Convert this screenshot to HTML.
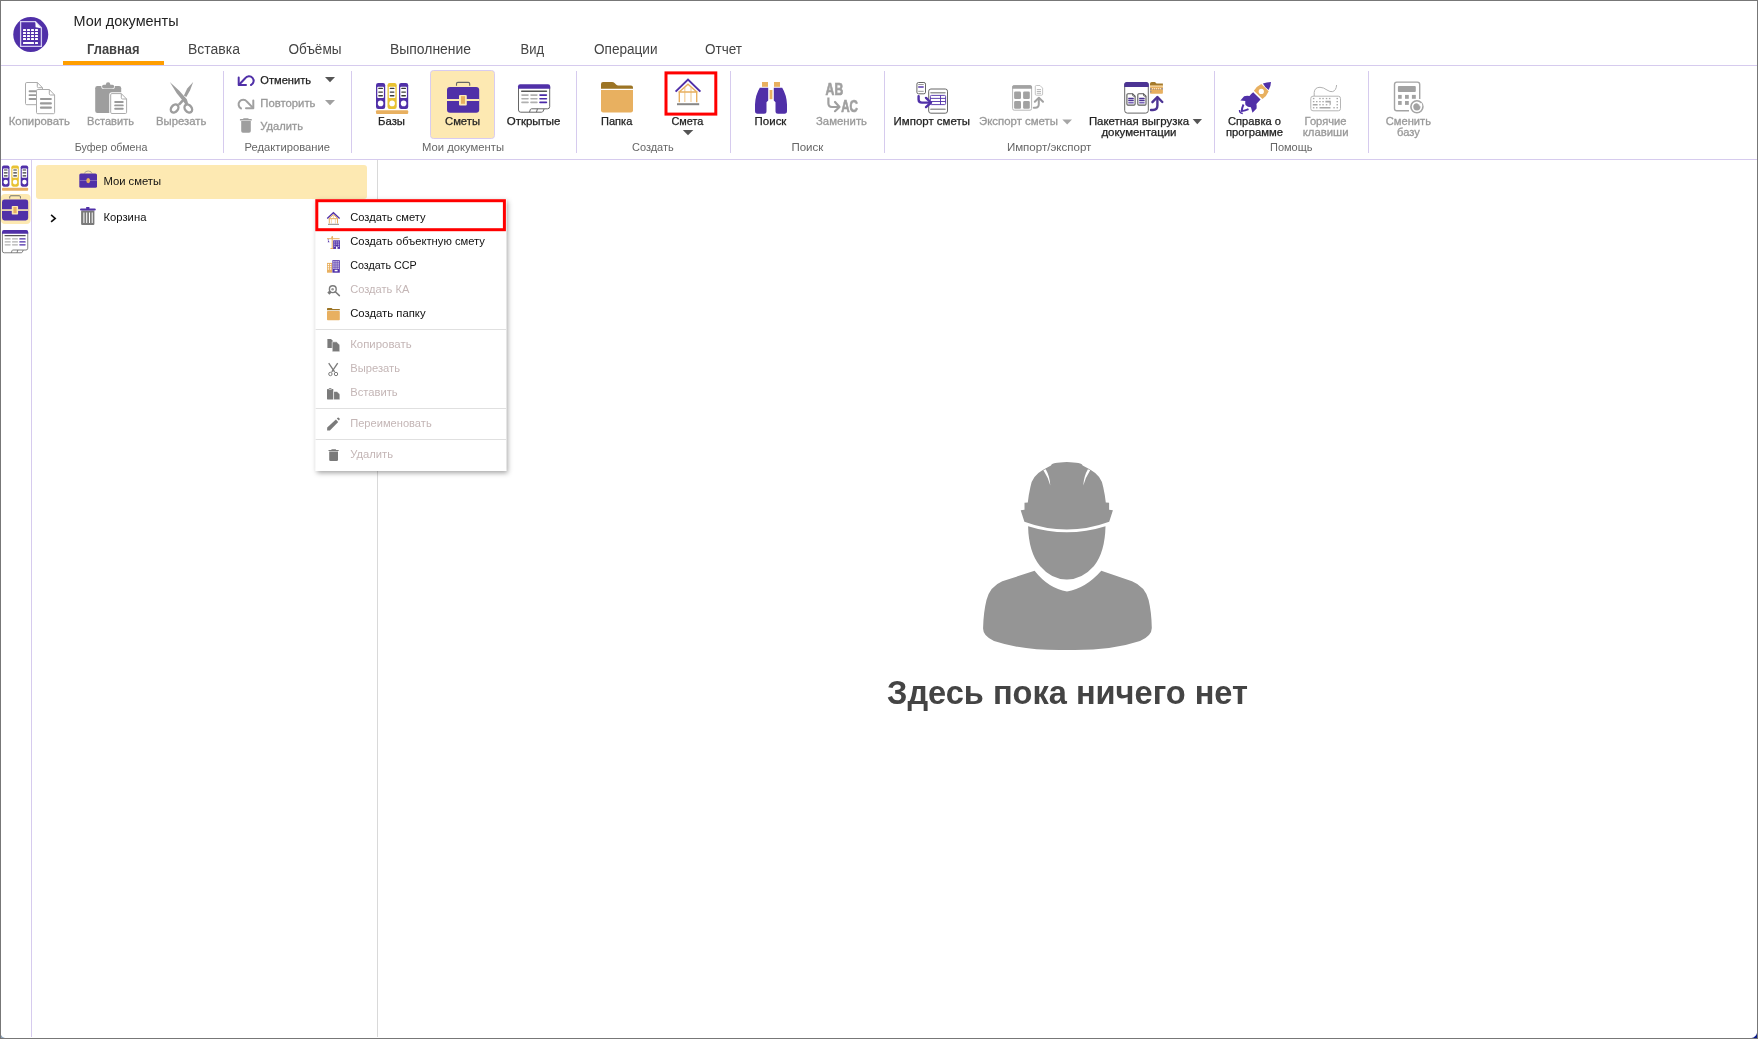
<!DOCTYPE html>
<html><head><meta charset="utf-8"><title>Мои документы</title>
<style>
html,body{margin:0;padding:0;width:1758px;height:1039px;overflow:hidden;background:#fff}
svg{position:absolute;left:0;top:0;display:block;will-change:transform}
text{font-family:"Liberation Sans",sans-serif}
.tab{font-size:14px;fill:#444}
.rb{font-size:11px;fill:#222;stroke:#222;stroke-width:0.25}
.rg{font-size:11px;fill:#999;stroke:#999;stroke-width:0.3}
.gl{font-size:11px;fill:#666}
.mi{font-size:11px;fill:#111}
.md{font-size:11px;fill:#c4b6b6}
</style></head>
<body>
<svg width="1758" height="1039" viewBox="0 0 1758 1039">
<!-- window frame -->
<rect x="0" y="0" width="1758" height="1039" fill="#fff"/>
<!-- ribbon lines -->
<rect x="1" y="65" width="1756" height="1" fill="#d6cbee"/>
<rect x="63" y="61" width="101" height="4" fill="#ff9e00"/>
<rect x="1" y="159" width="1756" height="1" fill="#d6cbee"/>
<g fill="#d6cbee">
<rect x="223" y="71" width="1" height="82"/>
<rect x="351" y="71" width="1" height="82"/>
<rect x="576" y="71" width="1" height="82"/>
<rect x="730" y="71" width="1" height="82"/>
<rect x="884" y="71" width="1" height="82"/>
<rect x="1214" y="71" width="1" height="82"/>
<rect x="1368" y="71" width="1" height="82"/>
</g>
<!-- sidebar & tree lines -->
<rect x="31" y="160" width="1" height="877" fill="#d6cbee"/>
<rect x="377" y="160" width="1" height="877" fill="#d9d9d9"/>
<!-- title & tabs -->
<text x="73.5" y="26" font-size="14" fill="#222" textLength="105" lengthAdjust="spacingAndGlyphs">Мои документы</text>
<text class="tab" x="87" y="54" font-weight="bold" fill="#333" textLength="52.5" lengthAdjust="spacingAndGlyphs">Главная</text>
<text class="tab" x="188" y="54" textLength="52" lengthAdjust="spacingAndGlyphs">Вставка</text>
<text class="tab" x="288.5" y="54" textLength="53" lengthAdjust="spacingAndGlyphs">Объёмы</text>
<text class="tab" x="390" y="54" textLength="81" lengthAdjust="spacingAndGlyphs">Выполнение</text>
<text class="tab" x="520.5" y="54" textLength="23.5" lengthAdjust="spacingAndGlyphs">Вид</text>
<text class="tab" x="594" y="54" textLength="63.5" lengthAdjust="spacingAndGlyphs">Операции</text>
<text class="tab" x="705" y="54" textLength="37" lengthAdjust="spacingAndGlyphs">Отчет</text>

<!-- selected Сметы button -->
<rect x="430.5" y="70.5" width="64" height="68" rx="3" fill="#fde9b2" stroke="#d8ccf0" stroke-width="1"/>
<!-- red box around Смета -->
<rect x="666" y="72.9" width="49.8" height="41.2" fill="none" stroke="#ff0000" stroke-width="3"/>

<!-- ribbon labels -->
<text class="rg" x="8.7" y="125" textLength="61.3" lengthAdjust="spacingAndGlyphs">Копировать</text>
<text class="rg" x="87" y="125" textLength="47" lengthAdjust="spacingAndGlyphs">Вставить</text>
<text class="rg" x="156" y="125" textLength="50.4" lengthAdjust="spacingAndGlyphs">Вырезать</text>
<text class="rb" x="260.3" y="83.6" textLength="50.7" lengthAdjust="spacingAndGlyphs">Отменить</text>
<text class="rg" x="260.3" y="106.5" textLength="55.2" lengthAdjust="spacingAndGlyphs">Повторить</text>
<text class="rg" x="260.3" y="129.8" textLength="42.7" lengthAdjust="spacingAndGlyphs">Удалить</text>
<text class="rb" x="378" y="125" textLength="27" lengthAdjust="spacingAndGlyphs">Базы</text>
<text class="rb" x="445" y="125" textLength="35" lengthAdjust="spacingAndGlyphs">Сметы</text>
<text class="rb" x="506.7" y="125" textLength="53.8" lengthAdjust="spacingAndGlyphs">Открытые</text>
<text class="rb" x="601" y="125" textLength="31.3" lengthAdjust="spacingAndGlyphs">Папка</text>
<text class="rb" x="671.4" y="125" textLength="31.9" lengthAdjust="spacingAndGlyphs">Смета</text>
<text class="rb" x="754.6" y="125" textLength="31.8" lengthAdjust="spacingAndGlyphs">Поиск</text>
<text class="rg" x="816" y="125" textLength="51" lengthAdjust="spacingAndGlyphs">Заменить</text>
<text class="rb" x="893.6" y="125" textLength="76.3" lengthAdjust="spacingAndGlyphs">Импорт сметы</text>
<text class="rg" x="979" y="125" textLength="79" lengthAdjust="spacingAndGlyphs">Экспорт сметы</text>
<text class="rb" x="1088.9" y="124.8" textLength="100.1" lengthAdjust="spacingAndGlyphs">Пакетная выгрузка</text>
<text class="rb" x="1101.4" y="135.5" textLength="75.1" lengthAdjust="spacingAndGlyphs">документации</text>
<text class="rb" x="1228" y="124.5" textLength="53" lengthAdjust="spacingAndGlyphs">Справка о</text>
<text class="rb" x="1226" y="135.5" textLength="57" lengthAdjust="spacingAndGlyphs">программе</text>
<text class="rg" x="1304.6" y="124.5" textLength="41.9" lengthAdjust="spacingAndGlyphs">Горячие</text>
<text class="rg" x="1302.7" y="135.5" textLength="45.8" lengthAdjust="spacingAndGlyphs">клавиши</text>
<text class="rg" x="1385.8" y="124.5" textLength="45.2" lengthAdjust="spacingAndGlyphs">Сменить</text>
<text class="rg" x="1397" y="135.5" textLength="22.8" lengthAdjust="spacingAndGlyphs">базу</text>
<!-- group labels -->
<text class="gl" x="74.7" y="151" textLength="72.7" lengthAdjust="spacingAndGlyphs">Буфер обмена</text>
<text class="gl" x="244.5" y="151" textLength="85.5" lengthAdjust="spacingAndGlyphs">Редактирование</text>
<text class="gl" x="422" y="151" textLength="82" lengthAdjust="spacingAndGlyphs">Мои документы</text>
<text class="gl" x="632" y="151" textLength="41.7" lengthAdjust="spacingAndGlyphs">Создать</text>
<text class="gl" x="791.4" y="151" textLength="31.9" lengthAdjust="spacingAndGlyphs">Поиск</text>
<text class="gl" x="1006.9" y="151" textLength="84.5" lengthAdjust="spacingAndGlyphs">Импорт/экспорт</text>
<text class="gl" x="1270" y="151" textLength="42.5" lengthAdjust="spacingAndGlyphs">Помощь</text>

<!-- tree -->
<rect x="36" y="165" width="331" height="34" rx="3" fill="#fde9b2"/>
<rect x="1" y="194" width="29.5" height="30" rx="4" fill="#fde9b2"/>
<text class="mi" x="103.4" y="185.1" textLength="57.7" lengthAdjust="spacingAndGlyphs">Мои сметы</text>
<text class="mi" x="103.5" y="221.3" textLength="42.9" lengthAdjust="spacingAndGlyphs">Корзина</text>

<!-- context menu -->
<g>
<rect x="315.6" y="199.2" width="190.6" height="271.8" fill="#fff" filter="url(#ds)"/>
<rect x="315.6" y="329" width="190.6" height="1" fill="#e0e0e0"/>
<rect x="315.6" y="408" width="190.6" height="1" fill="#e0e0e0"/>
<rect x="315.6" y="439" width="190.6" height="1" fill="#e0e0e0"/>
<rect x="316.8" y="200.7" width="187.6" height="29" fill="none" stroke="#ff0000" stroke-width="3"/>
<text class="mi" x="350.2" y="221" textLength="75.4" lengthAdjust="spacingAndGlyphs">Создать смету</text>
<text class="mi" x="350.2" y="245" textLength="134.8" lengthAdjust="spacingAndGlyphs">Создать объектную смету</text>
<text class="mi" x="350.2" y="269" textLength="66.5" lengthAdjust="spacingAndGlyphs">Создать ССР</text>
<text class="md" x="350.2" y="293" textLength="59.2" lengthAdjust="spacingAndGlyphs">Создать КА</text>
<text class="mi" x="350.2" y="317" textLength="75.4" lengthAdjust="spacingAndGlyphs">Создать папку</text>
<text class="md" x="350.2" y="348" textLength="61.4" lengthAdjust="spacingAndGlyphs">Копировать</text>
<text class="md" x="350.2" y="372" textLength="49.8" lengthAdjust="spacingAndGlyphs">Вырезать</text>
<text class="md" x="350.2" y="396" textLength="47.5" lengthAdjust="spacingAndGlyphs">Вставить</text>
<text class="md" x="350.2" y="427" textLength="81.5" lengthAdjust="spacingAndGlyphs">Переименовать</text>
<text class="md" x="350.2" y="458" textLength="42.8" lengthAdjust="spacingAndGlyphs">Удалить</text>
</g>

<!-- empty state -->
<text x="887" y="703.7" font-size="33.8" font-weight="bold" fill="#444" textLength="361" lengthAdjust="spacingAndGlyphs">Здесь пока ничего нет</text>

<!-- ===== ICONS: logo + clipboard/edit groups ===== -->
<g id="logo">
<circle cx="30.75" cy="34.5" r="17.5" fill="#5030a8"/>
<path d="M20.6,21.6 H35.4 L41.4,27.8 V46.4 H20.6 Z" fill="none" stroke="#d4ccf0" stroke-width="1.3"/>
<path d="M35.3,21.4 L35.6,27.3 L41.2,28.2 Z" fill="#fff"/>
<g fill="#fff">
<rect x="23" y="29" width="3" height="2" rx="0.5"/><rect x="27" y="29" width="3" height="2" rx="0.5"/><rect x="31" y="29" width="3" height="2" rx="0.5"/><rect x="35" y="29" width="3" height="2" rx="0.5"/>
<rect x="23" y="32" width="3" height="2" rx="0.5"/><rect x="27" y="32" width="3" height="2" rx="0.5"/><rect x="31" y="32" width="3" height="2" rx="0.5"/><rect x="35" y="32" width="3" height="2" rx="0.5"/>
<rect x="23" y="35" width="3" height="2" rx="0.5"/><rect x="27" y="35" width="3" height="2" rx="0.5"/><rect x="31" y="35" width="3" height="2" rx="0.5"/><rect x="35" y="35" width="3" height="2" rx="0.5"/>
<rect x="23" y="38" width="3" height="2" rx="0.5"/><rect x="27" y="38" width="3" height="2" rx="0.5"/><rect x="31" y="38" width="3" height="2" rx="0.5"/><rect x="35" y="38" width="3" height="2" rx="0.5"/>
<rect x="23" y="42" width="11" height="2" rx="0.5"/><rect x="35" y="42" width="3" height="2" rx="0.5"/>
</g>
</g>

<!-- copy (ribbon) -->
<g id="copyR">
<path d="M25.5,83.8 Q25.5,82.5 26.8,82.5 H37.3 L42.5,87.7 V103.5 Q42.5,104.7 41.3,104.7 H26.8 Q25.5,104.7 25.5,103.5 Z" fill="#fff" stroke="#ababab" stroke-width="1"/>
<path d="M37.3,82.5 V86.5 Q37.3,87.7 38.5,87.7 H42.5" fill="none" stroke="#ababab" stroke-width="1"/>
<g fill="#9a9a9a"><rect x="28.6" y="90.3" width="8" height="1.9" rx="0.9"/><rect x="28.6" y="94.2" width="8" height="1.9" rx="0.9"/><rect x="28.6" y="98.1" width="8" height="1.9" rx="0.9"/></g>
<path d="M36.5,90.8 Q36.5,89.5 37.8,89.5 H49.3 L54.6,95 V112.5 Q54.6,113.7 53.4,113.7 H37.8 Q36.5,113.7 36.5,112.5 Z" fill="#fff" stroke="#ababab" stroke-width="1"/>
<path d="M49.3,89.5 V93.8 Q49.3,95 50.5,95 H54.6" fill="none" stroke="#ababab" stroke-width="1"/>
<g fill="#9a9a9a"><rect x="39.9" y="98" width="12" height="2.1" rx="1"/><rect x="39.9" y="102.3" width="12" height="2.1" rx="1"/><rect x="39.9" y="106.6" width="12" height="2.1" rx="1"/></g>
</g>

<!-- paste (ribbon) -->
<g id="pasteR">
<rect x="95.2" y="86" width="26" height="27" rx="2.2" fill="#9e9e9e"/>
<g stroke="#fff" stroke-width="1.4" fill="#fff"><rect x="102" y="84.8" width="12.2" height="3.6" rx="1.8"/><circle cx="108.1" cy="84.4" r="2.2"/></g>
<g fill="#9e9e9e"><rect x="102" y="84.8" width="12.2" height="3.6" rx="1.8"/><circle cx="108.1" cy="84.4" r="2.2"/></g>
<path d="M110.5,94.8 Q110.5,93.4 111.9,93.4 H121.3 L126.8,99 V112.3 Q126.8,113.7 125.4,113.7 H111.9 Q110.5,113.7 110.5,112.3 Z" fill="#fff" stroke="#fff" stroke-width="2.5"/>
<path d="M110.7,94.8 Q110.7,93.6 111.9,93.6 H121.3 L126.6,99 V112.3 Q126.6,113.5 125.4,113.5 H111.9 Q110.7,113.5 110.7,112.3 Z" fill="#fff" stroke="#ababab" stroke-width="1"/>
<path d="M121.3,93.6 V97.8 Q121.3,99 122.5,99 H126.6" fill="none" stroke="#ababab" stroke-width="1"/>
<g fill="#9a9a9a"><rect x="114.2" y="101" width="9.5" height="1.9" rx="0.9"/><rect x="114.2" y="104.4" width="9.5" height="1.9" rx="0.9"/><rect x="114.2" y="107.8" width="9.5" height="1.9" rx="0.9"/></g>
</g>

<!-- scissors (ribbon) -->
<g id="scissorsR" fill="#9e9e9e">
<path d="M169.8,82 L179.3,90.8 L186.8,99.2 L188.4,104.2 L185.9,105.3 L183.2,101.2 L176.7,93.2 Z"/>
<path d="M193.2,82 L190,90.4 L186.3,96.9 L183.9,95.4 L187.2,88.6 Z"/>
<path d="M182.9,98.4 L177.6,104.3 L179.9,105.5 L184.6,100.4 Z"/>
<ellipse cx="174.6" cy="108.5" rx="3.3" ry="4.5" transform="rotate(38 174.6 108.5)" fill="none" stroke="#9e9e9e" stroke-width="2.4"/>
<ellipse cx="188.3" cy="108.5" rx="3.3" ry="4.5" transform="rotate(-38 188.3 108.5)" fill="none" stroke="#9e9e9e" stroke-width="2.4"/>
</g>

<!-- undo / redo / delete -->
<g fill="none" stroke-width="2" stroke-linecap="round" stroke-linejoin="round">
<path d="M238.7,77.6 V85.1 H246" stroke="#5030a8"/>
<path d="M239,84.8 L245.2,78.3 A4.6,4.6 0 1 1 251,85" stroke="#5030a8"/>
<path d="M253.3,100.6 V108.2 H246" stroke="#a0a0a0"/>
<path d="M241,108.4 A4.6,4.6 0 1 1 246.8,101.5 L253,107.9" stroke="#a0a0a0"/>
</g>
<g fill="#9e9e9e">
<rect x="239.9" y="119.1" width="11.9" height="1.3" rx="0.5"/>
<rect x="243.2" y="118.2" width="5.4" height="1.2" rx="0.5"/>
<path d="M241.2,121 H250.8 V131 Q250.8,132.7 249.1,132.7 H242.9 Q241.2,132.7 241.2,131 Z"/>
</g>
<!-- dropdown arrows -->
<path d="M325,77 H335 L330,82.3 Z" fill="#555"/>
<path d="M325,100 H335 L330,105.3 Z" fill="#a0a0a0"/>
<path d="M682.8,130 H693.3 L688,135.3 Z" fill="#555"/>
<path d="M1062.3,119.5 H1072 L1067.2,124.6 Z" fill="#a6a6a6"/>
<path d="M1192.7,119 H1202 L1197.3,124.2 Z" fill="#555"/>
<!-- ===== ICONS: ribbon middle/right ===== -->
<!-- Базы -->
<g id="bazy">
<rect x="376" y="83" width="9.2" height="26" rx="2.2" fill="#5030a8"/>
<rect x="387.5" y="83" width="9.2" height="26" rx="2.2" fill="#e8c232"/>
<rect x="399" y="83" width="9.2" height="26" rx="2.2" fill="#5030a8"/>
<g fill="#fff">
<rect x="377.3" y="86.7" width="6.6" height="11.3" rx="0.8"/><circle cx="380.6" cy="103.4" r="2.8"/>
<rect x="388.8" y="86.7" width="6.6" height="11.3" rx="0.8"/><circle cx="392.1" cy="103.4" r="2.8"/>
<rect x="400.3" y="86.7" width="6.6" height="11.3" rx="0.8"/><circle cx="403.6" cy="103.4" r="2.8"/>
</g>
<g fill="#3a3a3a">
<rect x="378.2" y="87.8" width="4.8" height="1.3" rx="0.6"/><rect x="378.2" y="91.4" width="4.8" height="1.3" rx="0.6"/><rect x="378.2" y="95.1" width="4.8" height="1.3" rx="0.6"/>
<rect x="389.7" y="87.8" width="4.8" height="1.3" rx="0.6"/><rect x="389.7" y="91.4" width="4.8" height="1.3" rx="0.6"/><rect x="389.7" y="95.1" width="4.8" height="1.3" rx="0.6"/>
<rect x="401.2" y="87.8" width="4.8" height="1.3" rx="0.6"/><rect x="401.2" y="91.4" width="4.8" height="1.3" rx="0.6"/><rect x="401.2" y="95.1" width="4.8" height="1.3" rx="0.6"/>
</g>
<rect x="376" y="110.2" width="32.2" height="3.8" rx="1" fill="#e8b060"/>
</g>

<!-- Сметы briefcase -->
<g id="brief">
<path d="M456.5,85.8 V83.8 Q456.5,82.4 457.9,82.4 H468.3 Q469.7,82.4 469.7,83.8 V85.8" fill="none" stroke="#666" stroke-width="1.1"/>
<rect x="447" y="87" width="32.2" height="25.7" rx="3" fill="#5030a8"/>
<rect x="447" y="99" width="32.2" height="2" fill="#fde9b2"/>
<rect x="459" y="95" width="7.8" height="10.5" rx="1" fill="#fde9b2"/>
<rect x="461" y="96.2" width="4" height="7.6" fill="#e8b060"/>
</g>

<!-- Открытые -->
<g id="opened">
<path d="M518.5,87 V110 Q518.5,112.2 520.7,112.2 H541.6 Q542.6,112.2 543,111.4 L544.2,108.8 H547.5 Q549.7,108.8 549.7,106.6 V87 Z" fill="#fff"/>
<path d="M518.5,87 V110 Q518.5,112.2 520.7,112.2 H541.6 Q542.6,112.2 543,111.4 L544.2,108.8 H547.5 Q549.7,108.8 549.7,106.6 V87 M529.5,112.2 L530.3,109.6 Q530.6,108.8 531.4,108.8 H544.2 M537.4,108.8 L536.5,112.2" fill="none" stroke="#666" stroke-width="1"/>
<path d="M518,88.8 V86.5 Q518,84.3 520.2,84.3 H548 Q550.2,84.3 550.2,86.5 V88.8 Z" fill="#5030a8"/>
<rect x="521" y="90.4" width="26.2" height="1.5" rx="0.7" fill="#555"/>
<g fill="#b0b0b0"><rect x="521.2" y="94.3" width="7.6" height="1.6" rx="0.8"/><rect x="530.2" y="94.3" width="7.5" height="1.6" rx="0.8"/>
<rect x="521.2" y="98" width="7.6" height="1.6" rx="0.8"/><rect x="530.2" y="98" width="7.5" height="1.6" rx="0.8"/>
<rect x="521.2" y="101.6" width="7.6" height="1.6" rx="0.8"/><rect x="530.2" y="101.6" width="7.5" height="1.6" rx="0.8"/></g>
<g fill="#4a2aa8"><rect x="539.2" y="94.3" width="8" height="1.6" rx="0.8"/><rect x="539.2" y="98" width="8" height="1.6" rx="0.8"/><rect x="539.2" y="101.6" width="8" height="1.6" rx="0.8"/></g>
</g>

<!-- Папка folder -->
<g id="folderR">
<path d="M601,88.8 V84 Q601,82 603,82 H612 Q613.6,82 614.8,83.3 L616,84.5 Q617,85.5 618.3,85.5 H631 Q633,85.5 633,87.5 V88.8 Z" fill="#9c7424"/>
<path d="M601,90.1 H633 V110.2 Q633,112.4 630.8,112.4 H603.2 Q601,112.4 601,110.2 Z" fill="#e8b060"/>
</g>

<!-- Смета house -->
<g id="houseR" fill="none">
<g stroke="#f3d3a3" stroke-width="1.3"><path d="M684.8,87.2 V102 M691,87.2 V102"/></g>
<g stroke="#e8b060" stroke-width="1.4"><path d="M678.6,92.6 L688,84.2 L697.4,92.6 M678.5,92 H697.5 M679.3,92 V102.3 M696.7,92 V102.3"/></g>
<path d="M675.6,91.6 L688,79.6 L700.4,91.6" stroke="#5030a8" stroke-width="2"/>
<rect x="677" y="103.2" width="22.2" height="2" fill="#888"/>
</g>

<!-- Поиск binoculars -->
<g id="binoc">
<g fill="#e8b060"><rect x="762" y="82" width="6" height="4.8"/><rect x="774" y="82" width="6" height="4.8"/><rect x="769.6" y="90" width="2.8" height="9.2"/></g>
<path d="M759.8,87.8 H768.2 V100.6 L766.5,102.3 V111.3 Q766.5,113.8 764,113.8 H757.5 Q755,113.8 755,111 V104.5 Q755.4,95 759.8,87.8 Z" fill="#5030a8"/>
<path d="M782.2,87.8 H773.8 V100.6 L775.5,102.3 V111.3 Q775.5,113.8 778,113.8 H784.5 Q787,113.8 787,111 V104.5 Q786.6,95 782.2,87.8 Z" fill="#5030a8"/>
</g>

<!-- Заменить AB->AC -->
<g id="replace" fill="#a0a0a0" stroke="#a0a0a0" stroke-width="0.7">
<text x="825.6" y="94.8" font-size="16.5" font-weight="bold" textLength="17.6" lengthAdjust="spacingAndGlyphs">AB</text>
<text x="841.2" y="112" font-size="16.5" font-weight="bold" textLength="16.8" lengthAdjust="spacingAndGlyphs">AC</text>
<path d="M828.4,97.4 V103.3 Q828.4,107 832,107 H838.8" fill="none" stroke="#a0a0a0" stroke-width="2.2"/>
<path d="M835,102 L839.5,107 L835,111.2" fill="none" stroke="#a0a0a0" stroke-width="2.2" stroke-linecap="round" stroke-linejoin="round"/>
</g>

<!-- Импорт сметы -->
<g id="import" transform="translate(912,78)">
<rect x="4.9" y="4.5" width="8.6" height="11.3" rx="1.6" fill="#fff" stroke="#666" stroke-width="1"/>
<rect x="6.2" y="6" width="5.5" height="1" fill="#999"/>
<rect x="6.2" y="8.3" width="5.5" height="1.4" fill="#5030a8"/>
<rect x="6.2" y="12.8" width="5.5" height="1" fill="#999"/>
<rect x="16.7" y="11" width="18.8" height="24.2" rx="2.2" fill="#fff" stroke="#666" stroke-width="1"/>
<rect x="18.2" y="14" width="15.5" height="1.5" rx="0.7" fill="#999"/>
<rect x="18.2" y="30.6" width="15.5" height="1.5" rx="0.7" fill="#999"/>
<g fill="none" stroke="#5030a8" stroke-width="0.9"><rect x="18.4" y="17.4" width="15.2" height="9.2" rx="1"/><path d="M18.4,20.4 H33.6 M18.4,23.5 H33.6 M28.5,17.4 V26.6"/></g>
<path d="M6.6,18.2 V21.4 Q6.6,24.6 10,24.6 H18.6" fill="none" stroke="#fff" stroke-width="4"/>
<path d="M6.6,18.2 V21.4 Q6.6,24.6 10,24.6 H18.6" fill="none" stroke="#5030a8" stroke-width="2.4" stroke-linecap="round"/>
<path d="M14,19.9 L19,24.6 L14,29.1" fill="none" stroke="#5030a8" stroke-width="2.4" stroke-linecap="round" stroke-linejoin="round"/>
</g>

<!-- Экспорт сметы -->
<g id="export" transform="translate(1008,80)">
<rect x="4.6" y="5.6" width="19" height="24.6" rx="1.6" fill="#fff" stroke="#b8b8b8" stroke-width="1"/>
<path d="M4.2,8.7 V6.8 Q4.2,5.2 5.8,5.2 H22.4 Q24,5.2 24,6.8 V8.7 Z" fill="#a2a2a2"/>
<g fill="#a2a2a2"><rect x="6.1" y="11.4" width="6.9" height="7.7" rx="1.3"/><rect x="15.1" y="11.4" width="6.7" height="7.7" rx="1.3"/><rect x="6.1" y="21.1" width="6.9" height="7.7" rx="1.3"/><rect x="15.1" y="21.1" width="6.7" height="7.7" rx="1.3"/></g>
<path d="M27.3,6.6 Q27.3,5.5 28.4,5.5 H32 L34.6,8.1 V14.2 Q34.6,15.2 33.6,15.2 H28.4 Q27.3,15.2 27.3,14.2 Z" fill="#fff" stroke="#bcbcbc" stroke-width="0.9"/>
<g fill="#b0b0b0"><rect x="28.8" y="9.2" width="4.2" height="0.9"/><rect x="28.8" y="11" width="4.2" height="0.9"/><rect x="28.8" y="12.8" width="4.2" height="0.9"/></g>
<path d="M25.8,27.7 H27.3 Q30.8,27.7 30.8,24 V18.6" fill="none" stroke="#a2a2a2" stroke-width="2" stroke-linecap="round"/>
<path d="M26.8,21.7 L30.9,17.7 L35,21.7" fill="none" stroke="#a2a2a2" stroke-width="2" stroke-linecap="round" stroke-linejoin="round"/>
</g>

<!-- Пакетная выгрузка -->
<g id="paket" transform="translate(1120,78)">
<rect x="4.7" y="4.5" width="23.6" height="30.6" rx="2.6" fill="#fff" stroke="#666" stroke-width="1"/>
<path d="M4.2,9 V6.6 Q4.2,4 6.8,4 H26.2 Q28.8,4 28.8,6.6 V9 Z" fill="#4c3494"/>
<path d="M6.9,16.8 Q6.9,15.7 8,15.7 H12.6 L15.1,18.2 V26 Q15.1,27.1 14,27.1 H8 Q6.9,27.1 6.9,26 Z" fill="#fff" stroke="#5a5a5a" stroke-width="1.1"/>
<path d="M12.6,15.7 V17 Q12.6,18.2 13.8,18.2 H15.1" fill="none" stroke="#5a5a5a" stroke-width="0.9"/>
<path d="M17.8,16.8 Q17.8,15.7 18.9,15.7 H23.5 L26,18.2 V26 Q26,27.1 24.9,27.1 H18.9 Q17.8,27.1 17.8,26 Z" fill="#fff" stroke="#5a5a5a" stroke-width="1.1"/>
<path d="M23.5,15.7 V17 Q23.5,18.2 24.7,18.2 H26" fill="none" stroke="#5a5a5a" stroke-width="0.9"/>
<g fill="#4c3494"><rect x="8.2" y="19.8" width="5.6" height="1.4" rx="0.5"/><rect x="8.2" y="21.8" width="5.6" height="1.4" rx="0.5"/><rect x="19.1" y="19.8" width="5.6" height="1.4" rx="0.5"/><rect x="19.1" y="21.8" width="5.6" height="1.4" rx="0.5"/></g>
<g fill="#7a64b8"><rect x="8.2" y="23.9" width="5.6" height="1.5" rx="0.5"/><rect x="19.1" y="23.9" width="5.6" height="1.5" rx="0.5"/></g>
<path d="M30,8 V5.8 Q30,4 31.8,4 H35 L36.5,5.4 H42.9 V8 Z" fill="#a47a2c"/>
<rect x="30" y="8.4" width="12.9" height="7.4" rx="0.8" fill="#e8b060"/>
<rect x="30" y="7.3" width="12.9" height="1.5" fill="#f0cc90"/>
<g fill="#fff" opacity="0.85"><rect x="32" y="10.2" width="0.9" height="0.9"/><rect x="34" y="10.2" width="0.9" height="0.9"/><rect x="36" y="10.2" width="0.9" height="0.9"/><rect x="38" y="10.2" width="0.9" height="0.9"/><rect x="40" y="10.2" width="0.9" height="0.9"/></g>
<g fill="#8a8aa0"><rect x="30.2" y="10" width="1.2" height="2"/><rect x="30.2" y="12.8" width="1.2" height="1.6"/><rect x="33" y="11.2" width="0.8" height="0.8"/><rect x="35" y="11.2" width="0.8" height="0.8"/><rect x="37" y="11.2" width="0.8" height="0.8"/><rect x="39" y="11.2" width="0.8" height="0.8"/><rect x="41.5" y="10" width="1.2" height="1.6"/></g>
<path d="M31,32 H33 Q37.4,32 37.4,27.6 V19.6" fill="none" stroke="#4c3494" stroke-width="2.4" stroke-linecap="round"/>
<path d="M32.4,24.2 L37.4,19 L42.3,24" fill="none" stroke="#4c3494" stroke-width="2.4" stroke-linecap="round" stroke-linejoin="round"/>
</g>

<!-- Справка rocket -->
<g id="rocket" transform="translate(1234,78)">
<path d="M28.9,5.5 Q32.8,4 37,3.9 Q36.9,8.3 34.6,12 Q31,9.8 28.9,5.5 Z" fill="#5030a8"/>
<path d="M19.9,12.7 Q22.6,8.2 27.3,6 L34.7,13.2 Q32.8,17.9 28.5,20.9 Z" fill="#e8b060"/>
<circle cx="27.3" cy="13.4" r="2.6" fill="#fff"/>
<path d="M19.2,14.2 L26.6,21.5 Q24.2,24 22.4,26 Q22.9,28.4 22.6,30.6 L18.5,34.8 Q17.6,31.8 16.9,29.3 Q13.6,29 11.5,26.9 Q11,25 11.3,23.1 L6.4,22.4 L10.1,18.2 Q12.5,17.6 15.5,18 Q17,16 19.2,14.2 Z" fill="#5030a8"/>
<path d="M9.5,26.5 Q7.9,30 7.7,33.1 Q11.2,32.7 14.5,31.2" fill="none" stroke="#5030a8" stroke-width="1.9" stroke-linejoin="round"/>
<path d="M5.5,32 Q5.4,35.1 8.8,35.5" fill="none" stroke="#5030a8" stroke-width="1.4"/>
</g>

<!-- Горячие клавиши keyboard -->
<g id="keyb" transform="translate(1306,80)">
<rect x="4.8" y="16.2" width="29.7" height="14.6" rx="2.2" fill="#fff" stroke="#b6b6b6" stroke-width="1"/>
<path d="M8.2,16 V12.5 Q8.6,7.3 14,7.3 Q17.6,7.4 21,10 Q24,12.1 26.6,11.6 Q30.2,10.6 30.6,5" fill="none" stroke="#a8a8a8" stroke-width="0.9"/>
<g fill="#a8a8a8">
<rect x="6.9" y="17.9" width="1.5" height="1.3"/><rect x="13.2" y="17.9" width="1.5" height="1.3"/><rect x="16.3" y="17.9" width="1.5" height="1.3"/><rect x="19.8" y="17.9" width="1.5" height="1.3"/><rect x="22.9" y="17.9" width="1.5" height="1.3"/><rect x="30.5" y="17.9" width="1.5" height="1.3"/>
<rect x="6.9" y="21" width="1.5" height="1.3"/><rect x="10" y="21" width="1.5" height="1.3"/><rect x="13.2" y="21" width="1.5" height="1.3"/><rect x="16.3" y="21" width="1.5" height="1.3"/><rect x="30.5" y="21" width="1.5" height="1.3"/>
<path d="M19.4,20.8 H24.8 V24.6 L23.6,26 V22.4 H19.4 Z"/>
<rect x="6.7" y="24.1" width="5" height="1.5" rx="0.6"/><rect x="13.2" y="24.1" width="1.5" height="1.3"/><rect x="16.3" y="24.1" width="1.5" height="1.3"/><rect x="19.8" y="24.1" width="1.5" height="1.3"/><rect x="30.5" y="24.1" width="1.5" height="1.3"/>
<rect x="6.9" y="27.1" width="1.5" height="1.3"/><rect x="10" y="27.1" width="1.5" height="1.3"/><rect x="13.4" y="27" width="11.2" height="1.6" rx="0.6"/><rect x="27.3" y="27.1" width="1.5" height="1.3"/><rect x="30.5" y="27.1" width="1.5" height="1.3"/>
</g>
</g>

<!-- Сменить базу calculator -->
<g id="calc" transform="translate(1390,78)">
<path d="M19,32.7 H6.8 Q4.5,32.7 4.5,30.4 V6.4 Q4.5,4.1 6.8,4.1 H27.4 Q29.7,4.1 29.7,6.4 V21" fill="none" stroke="#a4a4a4" stroke-width="1.4"/>
<rect x="7.9" y="8.1" width="17.9" height="5.8" rx="1" fill="#a2a2a2"/>
<g fill="#a2a2a2"><rect x="8.1" y="16.9" width="3.6" height="3.9"/><rect x="15" y="16.9" width="3.8" height="3.9"/><rect x="21.9" y="16.9" width="3.9" height="3.9"/><rect x="8.1" y="23" width="3.6" height="3.9"/><rect x="15" y="23" width="3.8" height="3.9"/></g>
<circle cx="26.9" cy="28.8" r="6" fill="#fff" stroke="#a4a4a4" stroke-width="1.6"/>
<circle cx="26.9" cy="28.8" r="3.6" fill="#a2a2a2"/>
<path d="M27.6,24.6 Q29.6,25 30.6,26.6 L31.8,24.4 L32.4,28.6 L28.6,28 L30,27.2 Q29.2,26.1 27.6,25.9 Z" fill="#fff"/>
</g>
<!-- ===== ICONS: sidebar, tree, context menu, empty state ===== -->
<!-- sidebar icons (scaled copies) -->
<use href="#bazy" transform="translate(2,165.2) scale(0.8125) translate(-376,-82.6)"/>
<use href="#brief" transform="translate(2,196) scale(0.8125) translate(-447,-82.7)"/>
<use href="#opened" transform="translate(2,229.7) scale(0.8125) translate(-518,-83.8)"/>

<!-- tree: briefcase small -->
<g id="briefS">
<path d="M84.4,173.5 Q85,171 88.2,171 Q91.4,171 92,173.5" fill="none" stroke="#888" stroke-width="0.7"/>
<rect x="79.3" y="173.5" width="17.7" height="14.3" rx="1.6" fill="#5030a8"/>
<rect x="79.3" y="180.2" width="17.7" height="0.8" fill="#8a70c0"/>
<ellipse cx="88.2" cy="180.6" rx="1.9" ry="2.6" fill="#e8b060"/>
</g>
<!-- tree: trash -->
<g id="trashT">
<rect x="81.1" y="210.5" width="13.3" height="14.5" rx="1" fill="#7a7a7a"/>
<g fill="#fff"><rect x="83.4" y="212.5" width="1" height="10.5"/><rect x="86.2" y="212.5" width="1" height="10.5"/><rect x="89" y="212.5" width="1" height="10.5"/><rect x="91.7" y="212.5" width="1" height="10.5"/></g>
<rect x="80" y="208.4" width="15.8" height="2.2" rx="1.1" fill="#5030a8"/>
<rect x="86" y="207" width="3.6" height="2" rx="0.8" fill="#5030a8"/>
</g>
<!-- chevron -->
<path d="M51.1,214.9 L55.2,218.4 L51.1,221.9" fill="none" stroke="#111" stroke-width="1.6"/>

<!-- context menu icons -->
<g id="m_house" fill="none">
<g stroke="#f3d3a3" stroke-width="0.9"><path d="M331.4,218.8 V223.5 M335.4,218.8 V223.5 M333.4,214.8 V218.6"/></g>
<g stroke="#e8b060" stroke-width="1"><path d="M328.8,218.8 L333.4,214.6 L338,218.8 M328.8,218.7 H338 M329.3,218.5 V223.5 M337.5,218.5 V223.5"/></g>
<path d="M327.2,218.4 L333.4,212.7 L339.6,218.4" stroke="#5030a8" stroke-width="1.3"/>
<rect x="328" y="223.8" width="11" height="1" fill="#888"/>
</g>
<g id="m_crane">
<g fill="#e8b060"><rect x="327" y="238.2" width="12.6" height="1"/><rect x="331.7" y="236" width="1" height="13"/><rect x="330.5" y="248" width="4" height="1"/><path d="M331,238.2 L332.2,236 L333.4,238.2 Z"/></g>
<rect x="327.9" y="238.8" width="0.5" height="2" fill="#5030a8"/>
<path d="M327.6,242.2 L328.6,240.5 L329.6,242.2 Z" fill="#5030a8"/>
<rect x="333.2" y="240.3" width="6.8" height="8.6" fill="#5030a8"/>
<g fill="#fff"><rect x="334.3" y="241.5" width="1" height="1"/><rect x="336.3" y="241.5" width="1" height="1"/><rect x="338.2" y="241.5" width="1" height="1"/><rect x="334.3" y="243.6" width="1" height="1"/><rect x="336.3" y="243.6" width="1" height="1"/><rect x="338.2" y="243.6" width="1" height="1"/><rect x="334.3" y="245.7" width="1" height="1"/><rect x="338.2" y="245.7" width="1" height="1"/><rect x="336" y="246.5" width="1.5" height="2.4"/></g>
</g>
<g id="m_ccp">
<rect x="327" y="262.9" width="5.1" height="9.8" fill="#e8b060"/>
<g fill="#fff"><rect x="327.8" y="263.9" width="1.3" height="1.3"/><rect x="330" y="263.9" width="1.3" height="1.3"/><rect x="327.8" y="266.1" width="1.3" height="1.3"/><rect x="330" y="266.1" width="1.3" height="1.3"/><rect x="327.8" y="268.3" width="1.3" height="1.3"/><rect x="330" y="268.3" width="1.3" height="1.3"/></g>
<rect x="332.4" y="260.2" width="7.4" height="12.5" fill="#5030a8"/>
<g fill="#fff"><rect x="333.3" y="261.2" width="1.3" height="1.3"/><rect x="335.4" y="261.2" width="1.3" height="1.3"/><rect x="337.5" y="261.2" width="1.3" height="1.3"/>
<rect x="333.3" y="263.3" width="1.3" height="1.3"/><rect x="335.4" y="263.3" width="1.3" height="1.3"/><rect x="337.5" y="263.3" width="1.3" height="1.3"/>
<rect x="333.3" y="265.4" width="1.3" height="1.3"/><rect x="335.4" y="265.4" width="1.3" height="1.3"/><rect x="337.5" y="265.4" width="1.3" height="1.3"/>
<rect x="333.3" y="267.5" width="1.3" height="1.3"/><rect x="335.4" y="267.5" width="1.3" height="1.3"/><rect x="337.5" y="267.5" width="1.3" height="1.3"/>
<rect x="334.6" y="269.8" width="3" height="1.5"/></g>
</g>
<g id="m_ka">
<circle cx="332.8" cy="289.2" r="3.4" fill="#fff" stroke="#7a7a7a" stroke-width="1.4"/>
<circle cx="332.6" cy="289.3" r="1.3" fill="#999"/>
<path d="M335.3,291.8 L339.4,295.6" stroke="#7a7a7a" stroke-width="1.5" stroke-linecap="round"/>
<path d="M327.3,292.6 L329.6,290.4 L331.6,292.4 L329.4,294.7 Z" fill="#7a7a7a"/>
</g>
<g id="m_folder">
<path d="M327,310.3 V308.8 Q327,308 327.8,308 H331.6 L332.6,308.9 H339.8 V310.3 Z" fill="#9c7424"/>
<rect x="327" y="311" width="12.8" height="9.3" rx="0.8" fill="#e8b060"/>
</g>
<g fill="#7a7a7a">
<path d="M327.4,339 H331 L332.8,340.8 V348.1 H327.4 Z"/>
<path d="M332.2,341.8 H336.5 L339.8,345 V351.8 H332.2 Z" stroke="#fff" stroke-width="0.6"/>
</g>
<g id="m_sc" fill="none" stroke="#7a7a7a">
<path d="M328.7,363.2 L334.6,371.8" stroke-width="1.3"/>
<path d="M337.7,363.2 L331.8,371.8" stroke-width="1.3"/>
<circle cx="330.4" cy="374" r="1.7" stroke-width="1"/>
<circle cx="336" cy="374" r="1.7" stroke-width="1"/>
</g>
<g fill="#7a7a7a">
<rect x="327" y="389" width="6.3" height="10.4" rx="0.6"/>
<rect x="328.7" y="387.9" width="3" height="1.6" rx="0.6" stroke="#fff" stroke-width="0.5"/>
<path d="M333.6,391.4 H337 L339.9,394.2 V399.8 H333.6 Z" stroke="#fff" stroke-width="0.6"/>
</g>
<g fill="#7a7a7a">
<path d="M327.2,427.6 L335.9,419.6 L338.2,421.9 L329.9,430.4 L327.1,430.6 Z"/>
<path d="M336.8,418.6 L337.7,417.7 Q338.2,417.3 338.7,417.7 L339.6,418.6 Q340,419.1 339.6,419.6 L338.9,420.4 Z"/>
</g>
<g fill="#7a7a7a">
<rect x="328.4" y="449.9" width="10.4" height="1" rx="0.4"/>
<rect x="331.3" y="449.3" width="4.8" height="1" rx="0.4"/>
<path d="M329.2,451.6 H338 V459.8 Q338,461.1 336.7,461.1 H330.5 Q329.2,461.1 329.2,459.8 Z"/>
</g>

<!-- empty-state worker silhouette -->
<g id="worker" fill="#959595">
<path d="M1051,465.4 Q1051.5,462.3 1066.8,461.9 Q1082,462.3 1082.6,465.4 L1088.2,468.4 L1091.2,470.3 Q1101.5,476 1103.2,487 Q1105,495 1105.8,502.4 L1109.1,502.8 V509.8 L1112.9,510.2 L1109.2,521.7 Q1066.8,537.3 1024.4,521.7 L1020.7,510.2 L1024.5,509.8 V502.8 L1027.8,502.4 Q1028.6,495 1030.4,487 Q1032.1,476 1042.4,470.3 L1045.4,468.4 Z"/>
<path d="M1028.1,526.2 Q1066.8,538.4 1105.5,526.2 Q1105,552 1094,566 Q1082,579.6 1066.8,579.4 Q1051.6,579.6 1040,566 Q1028.6,552 1028.1,526.2 Z"/>
<path d="M1034.6,570.8 Q1048.5,588.6 1067,591.4 Q1085.5,588.6 1101.3,570.8 L1132,581.3 Q1145,586.5 1148.6,600 Q1151.5,612 1151.8,627.8 Q1152,636 1140,641 Q1110,651 1067,650 Q1024,651 994,641 Q982.5,636 983.1,627.8 Q983.5,612 986.5,600 Q990,586.5 1002.3,581.3 Z"/>
<path d="M1043.4,470.2 L1045.7,469.3 Q1049.7,476 1050.3,485.6 Q1048,477 1043.4,470.2 Z" fill="#fff"/>
<path d="M1090.2,470.2 L1087.9,469.3 Q1083.9,476 1083.3,485.6 Q1085.6,477 1090.2,470.2 Z" fill="#fff"/>
</g>
<!-- frame border -->
<path id="corner-br" d="M1757,1033 V1038 H1751.5 Q1755.8,1037.2 1757,1033 Z" fill="#0a1a8a"/>
<path d="M1,1035 V1038 H5 Q2,1037.5 1,1035 Z" fill="#8ca2b8"/>
<rect x="0.5" y="0.5" width="1757" height="1038" fill="none" stroke="#777" stroke-width="1"/>
<defs><filter id="ds" x="-10%" y="-10%" width="120%" height="120%"><feDropShadow dx="1.5" dy="2" stdDeviation="2.6" flood-color="#000" flood-opacity="0.36"/></filter></defs>
</svg>
</body></html>
